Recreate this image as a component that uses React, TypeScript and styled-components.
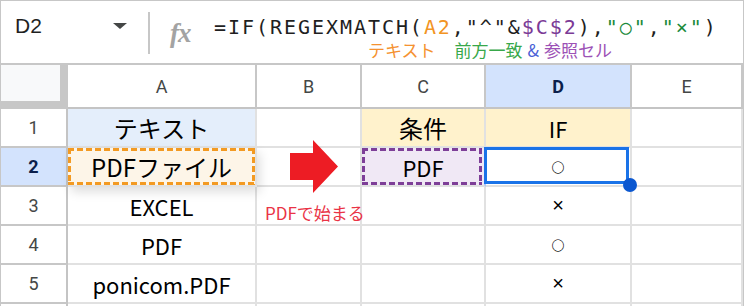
import React from "react";
import styled, { createGlobalStyle, css } from "styled-components";

const Global = createGlobalStyle`
  html, body { margin: 0; padding: 0; background: #fff; }
  body { font-family: "Liberation Sans", Arial, sans-serif; }
`;

const Frame = styled.div`
  width: 744px;
  box-sizing: border-box;
  border: 1px solid #c7c7c7;
  background: #fff;
`;

const FormulaBar = styled.div`
  display: flex;
  height: 64px;
  box-sizing: border-box;
  border-bottom: 2px solid #c7c7c7;
`;

const NameBox = styled.div`
  width: 147px;
  box-sizing: border-box;
  display: flex;
  align-items: flex-start;
  justify-content: space-between;
  padding: 12px 21px 0 14px;
  font-family: "Liberation Sans", Arial, sans-serif;
  font-size: 21px;
  line-height: 26px;
  color: #1f1f1f;
`;

const Caret = styled.span`
  width: 0;
  height: 0;
  margin-top: 10px;
  border-left: 7px solid transparent;
  border-right: 7px solid transparent;
  border-top: 6px solid #444746;
`;

const Separator = styled.div`
  width: 2px;
  height: 42px;
  margin-top: 11px;
  background: #c7c7c7;
`;

const FxBox = styled.div`
  width: 64px;
  box-sizing: border-box;
  padding: 17px 0 0 20px;
  font-family: "Liberation Serif", "Times New Roman", serif;
  font-style: italic;
  font-weight: bold;
  font-size: 27px;
  line-height: 30px;
  color: #a3a3a3;
  letter-spacing: -1px;
`;

const FormulaCol = styled.div`
  display: flex;
  flex-direction: column;
  padding-top: 13px;
`;

const FormulaLine = styled.div`
  font-family: "DejaVu Sans Mono", "Liberation Mono", monospace;
  font-size: 20px;
  line-height: 26px;
  letter-spacing: 1.95px;
  color: #1f1f1f;
  white-space: nowrap;
`;

const Tok = styled.span<{ $c: string; $big?: boolean }>`
  color: ${(p) => p.$c};
  font-size: ${(p) => (p.$big ? "24px" : "inherit")};
  line-height: 0;
`;

const NoteLine = styled.div`
  display: flex;
  padding-left: 154px;
  font-family: "Noto Sans CJK JP", sans-serif;
  font-size: 17px;
  line-height: 20px;
  white-space: nowrap;
`;

const Note = styled.span<{ $c: string; $gap: number }>`
  color: ${(p) => p.$c};
  margin-left: ${(p) => p.$gap}px;
`;

const Sheet = styled.div`
  position: relative;
  display: grid;
  grid-template-columns: 67px 189px 105px 124px 146px 111px;
  grid-template-rows: 44px repeat(6, 39px);
`;

const Corner = styled.div`
  box-sizing: border-box;
  background: #f8f9fa;
  border-right: 8px solid #c7c7c7;
  border-bottom: 8px solid #c7c7c7;
`;

const ColHeader = styled.div<{ $sel?: boolean }>`
  box-sizing: border-box;
  display: flex;
  align-items: center;
  justify-content: center;
  border-right: 2px solid #c7c7c7;
  border-bottom: 2px solid #c4c4c4;
  font-family: Roboto, "Liberation Sans", sans-serif;
  font-size: 18px;
  background: ${(p) => (p.$sel ? "#d3e3fd" : "#fff")};
  color: ${(p) => (p.$sel ? "#0b1f4b" : "#444746")};
  font-weight: ${(p) => (p.$sel ? 700 : 400)};
`;

const RowHeader = styled.div<{ $sel?: boolean }>`
  box-sizing: border-box;
  display: flex;
  align-items: center;
  justify-content: center;
  border-right: 2px solid #c4c4c4;
  border-bottom: 2px solid #c7c7c7;
  font-family: Roboto, "Liberation Sans", sans-serif;
  font-size: 18px;
  background: ${(p) => (p.$sel ? "#d3e3fd" : "#fff")};
  color: ${(p) => (p.$sel ? "#0b1f4b" : "#444746")};
  font-weight: ${(p) => (p.$sel ? 700 : 400)};
`;

const Cell = styled.div<{
  $bg?: string;
  $size?: number;
  $dash?: string;
  $dashInset?: number;
  $lift?: boolean;
  $rightLine?: string;
}>`
  position: relative;
  box-sizing: border-box;
  display: flex;
  align-items: center;
  justify-content: center;
  border-right: 2px solid ${(p) => p.$rightLine || "#e1e1e1"};
  border-bottom: 2px solid #e1e1e1;
  background: ${(p) => p.$bg || "#fff"};
  font-family: "Noto Sans CJK JP", sans-serif;
  font-size: ${(p) => p.$size || 22}px;
  color: #000;
  white-space: nowrap;
  ${(p) =>
    p.$lift &&
    css`
      z-index: 1;
      box-shadow: 3px 5px 10px rgba(0, 0, 0, 0.13);
    `}
  ${(p) =>
    p.$dash &&
    css`
      &::after {
        content: "";
        position: absolute;
        top: 0;
        left: 0;
        bottom: 0;
        right: ${p.$dashInset || 0}px;
        pointer-events: none;
        background:
          repeating-linear-gradient(90deg, ${p.$dash} 0 6px, transparent 6px 9px) top left / 100% 3px no-repeat,
          repeating-linear-gradient(90deg, ${p.$dash} 0 6px, transparent 6px 9px) bottom left / 100% 3px no-repeat,
          repeating-linear-gradient(180deg, ${p.$dash} 0 6px, transparent 6px 9px) top left / 3px 100% no-repeat,
          repeating-linear-gradient(180deg, ${p.$dash} 0 6px, transparent 6px 9px) top right / 3px 100% no-repeat;
      }
    `}
`;

const Mark = styled.span<{ $kind: "o" | "x" }>`
  font-family: ${(p) => (p.$kind === "o" ? '"Noto Sans CJK JP", sans-serif' : '"Liberation Sans", sans-serif')};
  font-size: ${(p) => (p.$kind === "o" ? 13 : 20)}px;
  font-weight: ${(p) => (p.$kind === "o" ? 900 : 400)};
`;

const Selection = styled.div`
  position: absolute;
  top: -1px;
  left: -2px;
  right: 1px;
  bottom: 1px;
  border: 3px solid #1a73e8;
  pointer-events: none;
`;

const Handle = styled.div`
  position: absolute;
  right: -7px;
  bottom: -7px;
  width: 14px;
  height: 14px;
  border-radius: 50%;
  background: #0b57d0;
  z-index: 2;
`;

const Arrow = styled.svg`
  position: absolute;
  left: 289px;
  top: 75px;
`;

const Label = styled.div`
  position: absolute;
  left: 264px;
  top: 138px;
  font-family: "Noto Sans CJK JP", sans-serif;
  font-size: 17px;
  line-height: 20px;
  color: #ea3346;
  white-space: nowrap;
  z-index: 2;
`;

export default function App() {
  return (
    <>
      <Global />
      <Frame>
        <FormulaBar>
          <NameBox>
            <span>D2</span>
            <Caret />
          </NameBox>
          <Separator />
          <FxBox>fx</FxBox>
          <FormulaCol>
            <FormulaLine>
              =IF(REGEXMATCH(<Tok $c="#f29423">A2</Tok>,"^"&amp;
              <Tok $c="#7b3a96">$C$2</Tok>),<Tok $c="#1a8a3a">"○"</Tok>,
              <Tok $c="#1a8a3a">"×"</Tok>)
            </FormulaLine>
            <NoteLine>
              <Note $c="#f5922f" $gap={0}>テキスト</Note>
              <Note $c="#38a84a" $gap={19}>前方一致</Note>
              <Note $c="#4a5fd6" $gap={5}>&amp;</Note>
              <Note $c="#9c51b6" $gap={5}>参照セル</Note>
            </NoteLine>
          </FormulaCol>
        </FormulaBar>
        <Sheet>
          <Corner />
          <ColHeader>A</ColHeader>
          <ColHeader>B</ColHeader>
          <ColHeader>C</ColHeader>
          <ColHeader $sel>D</ColHeader>
          <ColHeader>E</ColHeader>

          <RowHeader>1</RowHeader>
          <Cell $bg="#e4eefb" $size={24}>テキスト</Cell>
          <Cell />
          <Cell $bg="#fff2cc" $size={24}>条件</Cell>
          <Cell $bg="#fff2cc">IF</Cell>
          <Cell />

          <RowHeader $sel>2</RowHeader>
          <Cell $bg="#fdf5e8" $size={24} $dash="#f39a22" $lift>PDFファイル</Cell>
          <Cell />
          <Cell $bg="#f0e8f5" $dash="#7e3f98" $dashInset={2} $rightLine="#aac8f7">PDF</Cell>
          <Cell>
            <Mark $kind="o">○</Mark>
            <Selection />
            <Handle />
          </Cell>
          <Cell />

          <RowHeader>3</RowHeader>
          <Cell>EXCEL</Cell>
          <Cell />
          <Cell />
          <Cell><Mark $kind="x">×</Mark></Cell>
          <Cell />

          <RowHeader>4</RowHeader>
          <Cell>PDF</Cell>
          <Cell />
          <Cell />
          <Cell><Mark $kind="o">○</Mark></Cell>
          <Cell />

          <RowHeader>5</RowHeader>
          <Cell>ponicom.PDF</Cell>
          <Cell />
          <Cell />
          <Cell><Mark $kind="x">×</Mark></Cell>
          <Cell />

          <RowHeader />
          <Cell />
          <Cell />
          <Cell />
          <Cell />
          <Cell />

          <Arrow width="48" height="54" viewBox="0 0 48 54">
            <polygon points="0,13 23,13 23,0 48,26.5 23,53 23,40 0,40" fill="#ed1c24" />
          </Arrow>
          <Label>PDFで始まる</Label>
        </Sheet>
      </Frame>
    </>
  );
}
